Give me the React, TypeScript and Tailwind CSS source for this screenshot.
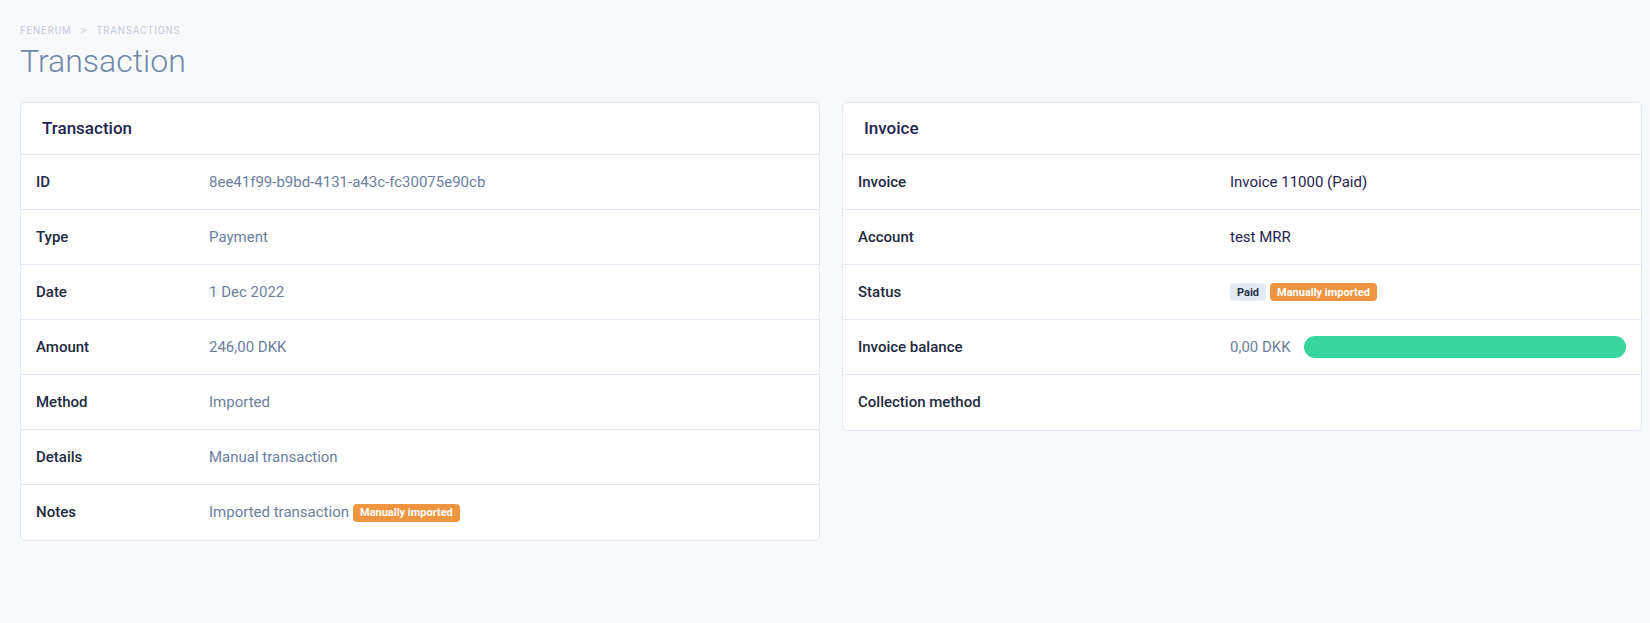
import React from "react";

const Badge = ({ children, tone }: { children: React.ReactNode; tone: "orange" | "gray" }) => (
  <span
    className={
      "inline-flex h-[18px] items-center rounded-[4px] px-[7px] text-[11px] font-bold leading-none " +
      (tone === "orange" ? "bg-[#f0953f] text-white" : "bg-[#e3e9f3] text-[#27304a]")
    }
  >
    {children}
  </span>
);

type Row = { label: string; value: React.ReactNode };

const Card = ({ title, rows, labelW }: { title: string; rows: Row[]; labelW: string }) => (
  <div className="rounded-[5px] border border-[#e2e9f4] bg-white">
    <div className="flex h-[52px] items-center border-b border-[#e2e9f4] pl-[21px] text-[17px] font-medium text-[#1f2450]">
      {title}
    </div>
    {rows.map((r, i) => (
      <div
        key={r.label}
        className={
          "flex h-[55px] items-center pl-[15px] pr-[15px] " +
          (i < rows.length - 1 ? "border-b border-[#e2e9f4]" : "")
        }
      >
        <div className={labelW + " shrink-0 text-[15px] font-medium text-[#232a40]"}>{r.label}</div>
        <div className="flex min-w-0 flex-1 items-center text-[15px] text-[#6c7ea0]">{r.value}</div>
      </div>
    ))}
  </div>
);

export default function App() {
  const txRows: Row[] = [
    { label: "ID", value: "8ee41f99-b9bd-4131-a43c-fc30075e90cb" },
    { label: "Type", value: "Payment" },
    { label: "Date", value: "1 Dec 2022" },
    { label: "Amount", value: "246,00 DKK" },
    { label: "Method", value: "Imported" },
    { label: "Details", value: "Manual transaction" },
    {
      label: "Notes",
      value: (
        <span className="flex items-center gap-[4px]">
          <span>Imported transaction</span>
          <Badge tone="orange">Manually imported</Badge>
        </span>
      ),
    },
  ];
  const invRows: Row[] = [
    { label: "Invoice", value: <span className="text-[#1f2450]">Invoice 11000 (Paid)</span> },
    { label: "Account", value: <span className="text-[#1f2450]">test MRR</span> },
    {
      label: "Status",
      value: (
        <span className="flex items-center gap-[4px]">
          <Badge tone="gray">Paid</Badge>
          <Badge tone="orange">Manually imported</Badge>
        </span>
      ),
    },
    {
      label: "Invoice balance",
      value: (
        <span className="flex w-full items-center gap-[13px]">
          <span className="shrink-0">0,00 DKK</span>
          <span className="h-[22px] flex-1 rounded-full bg-[#37d69f]" />
        </span>
      ),
    },
    { label: "Collection method", value: "" },
  ];
  return (
    <div
      className="min-h-[623px] bg-[#f8f9fb] pl-[20px] pr-[8px] pt-[24px]"
      style={{ fontFamily: "Roboto, 'Liberation Sans', sans-serif" }}
    >
      <div className="text-[10px] leading-[14px] tracking-[0.09em] text-[#c2cbda]">
        FENERUM <span className="mx-[6px]">&gt;</span> TRANSACTIONS
      </div>
      <h1 className="mt-[3px] text-[32px] font-light leading-[40px] text-[#7287ab]">Transaction</h1>
      <div className="mt-[21px] grid grid-cols-2 items-start gap-[22px]">
        <Card title="Transaction" rows={txRows} labelW="w-[173px]" />
        <Card title="Invoice" rows={invRows} labelW="w-[372px]" />
      </div>
    </div>
  );
}
